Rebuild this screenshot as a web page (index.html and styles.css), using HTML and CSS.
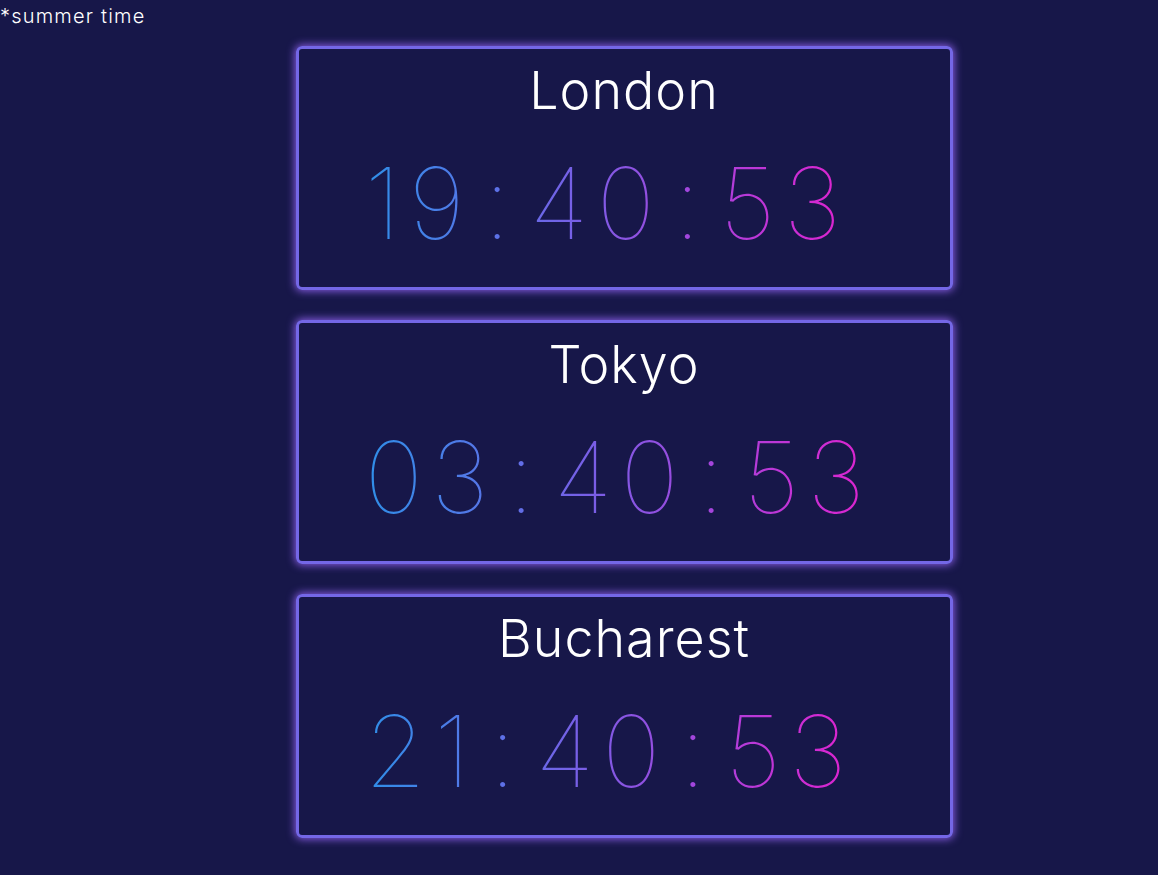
FILE: index.html
```html
<!DOCTYPE html>
<html>
<head>
<meta charset="utf-8">
<link rel="stylesheet" href="styles.css">
</head>
<body>
<div class="note">*summer time</div>
<main class="clocks">
  <section class="card">
    <h2 class="city">London</h2>
    <div class="time"><span class="grp">19</span><span class="sep">:</span><span class="grp">40</span><span class="sep">:</span><span class="grp">53</span></div>
  </section>
  <section class="card">
    <h2 class="city">Tokyo</h2>
    <div class="time"><span class="grp">03</span><span class="sep">:</span><span class="grp">40</span><span class="sep">:</span><span class="grp">53</span></div>
  </section>
  <section class="card">
    <h2 class="city">Bucharest</h2>
    <div class="time"><span class="grp">21</span><span class="sep">:</span><span class="grp">40</span><span class="sep">:</span><span class="grp">53</span></div>
  </section>
</main>
</body>
</html>
```
FILE: styles.css
```css
html, body {
  margin: 0;
  padding: 0;
  background: #171749;
  color: #ffffff;
  font-family: "Inter", "Noto Sans", sans-serif;
}
.note {
  font-size: 20px;
  font-weight: 300;
  line-height: 32px;
  height: 32px;
  margin-top: 0;
  letter-spacing: 1.2px;
}
.clocks {
  display: flex;
  flex-direction: column;
  align-items: center;
  gap: 30px;
  margin-top: 14px;
  padding-left: 90px;
  padding-bottom: 40px;
}
.card {
  box-sizing: border-box;
  width: 657px;
  height: 244px;
  border: 3px solid #7467e6;
  border-radius: 6px;
  box-shadow: 0 0 9px 1px #8c5fe8;
  display: flex;
  flex-direction: column;
}
.city {
  margin: 0;
  font-weight: 300;
  font-size: 52px;
  line-height: 60px;
  margin-top: 12px;
  text-align: center;
  letter-spacing: 1px;
}
.time {
  margin-top: 32px;
  align-self: flex-start;
  margin-left: 66px;
  display: flex;
  align-items: baseline;
  font-size: 99px;
  font-weight: 100;
  line-height: 100px;
  background: linear-gradient(90deg, #2f8fe8 0%, #7a5ee6 45%, #e022cf 100%);
  -webkit-background-clip: text;
  background-clip: text;
  color: transparent;
}
.grp {
  letter-spacing: 8px;
}
.sep {
  margin: 0 19px 0 11px;
}
```
